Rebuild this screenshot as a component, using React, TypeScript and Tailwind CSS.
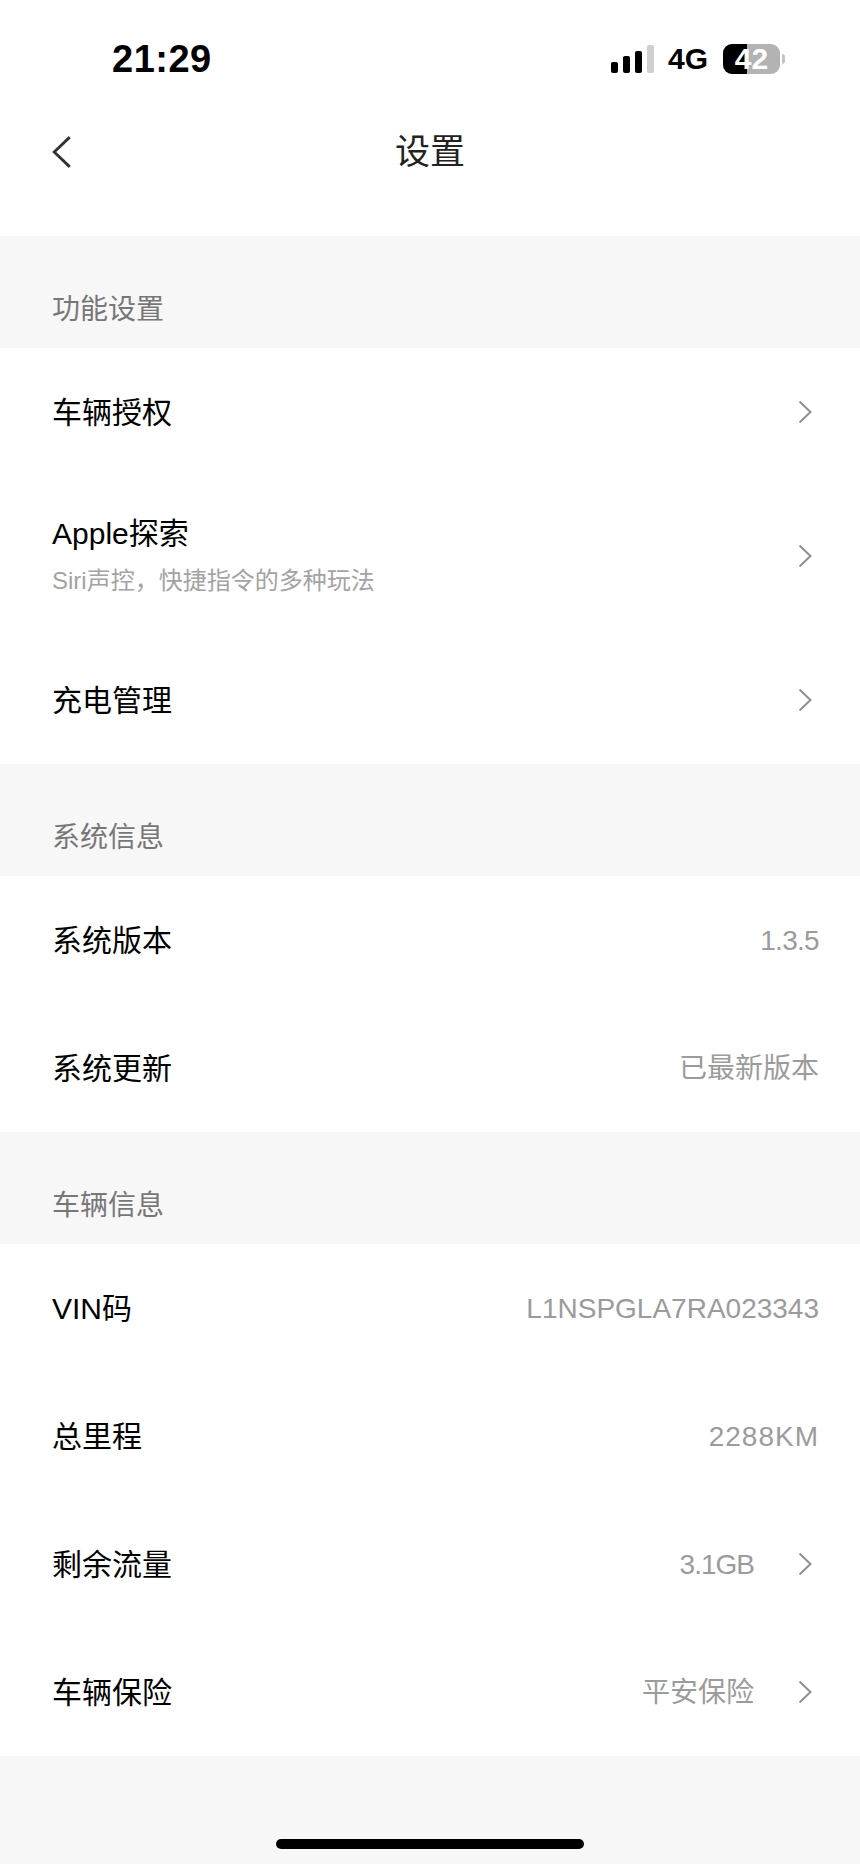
const CJK = "font-['Liberation_Sans','Noto_Sans_CJK_SC',sans-serif]";

function Chevron({ className, right = true }: { className: string; right?: boolean }) {
  return (
    <svg viewBox="0 0 14 24" fill="none" className={className}>
      <path d={right ? "M1.5 1.5 12.5 12 1.5 22.5" : "M12.5 1.5 1.5 12 12.5 22.5"} stroke="currentColor" strokeWidth="2" />
    </svg>
  );
}

function StatusBar() {
  return (
    <div className="h-[96px] flex items-center justify-between pl-[112px] pr-[75px] pt-[21px]">
      <span className="font-['Liberation_Sans',sans-serif] font-bold text-[38px] leading-[38px] tracking-[0.5px] text-black">21:29</span>
      <div className="flex items-center">
        <div className="flex items-end gap-[5px] h-[28px] mr-[14px]">
          <div className="w-[7px] h-[11px] rounded-[2px] bg-black" />
          <div className="w-[7px] h-[17px] rounded-[2px] bg-black" />
          <div className="w-[7px] h-[22px] rounded-[2px] bg-black" />
          <div className="w-[7px] h-[28px] rounded-[2px] bg-[#cfcfcf]" />
        </div>
        <span className="font-['Liberation_Sans',sans-serif] font-bold text-[30px] leading-[28px] text-black mr-[15px]">4G</span>
        <div className="flex items-center gap-[2px]">
          <div className="relative w-[57px] h-[30px] rounded-[9px] bg-[#b3b3b3] flex items-center justify-center">
            <div className="absolute left-0 top-0 bottom-0 w-[24px] rounded-l-[9px] bg-black" />
            <span className="relative font-['Liberation_Sans',sans-serif] font-bold text-[30px] leading-[30px] text-white">42</span>
          </div>
          <div className="w-[3px] h-[10px] rounded-r-[3px] bg-[#c4c4c4]" />
        </div>
      </div>
    </div>
  );
}

function SectionLabel({ text }: { text: string }) {
  return (
    <div className="h-[112px] bg-[#f7f7f7] flex items-end pl-[52px] pb-[20px]">
      <span className="text-[28px] leading-[36px] text-[#777777]">{text}</span>
    </div>
  );
}

function Row({ title, sub, value, valueClass = "", arrow }: { title: string; sub?: string; value?: string; valueClass?: string; arrow?: boolean }) {
  return (
    <div className={`flex items-center justify-between pl-[52px] ${arrow ? "pr-[48px]" : "pr-[41px]"} ${sub ? "h-[160px]" : "h-[128px]"}`}>
      <div className={`flex flex-col ${sub ? "" : "pt-[2px]"}`}>
        <span className="text-[30px] leading-[38px] text-black">{title}</span>
        {sub && <span className="text-[24px] leading-[32px] mt-[12px] text-[#a3a3a3]">{sub}</span>}
      </div>
      <div className="flex items-center gap-[44px]">
        {value && <span className={`pt-[2px] text-[28px] leading-[36px] text-[#9b9b9b] ${valueClass}`}>{value}</span>}
        {arrow && <Chevron className="w-[14px] h-[24px] text-[#8f8f8f]" />}
      </div>
    </div>
  );
}

export default function App() {
  return (
    <div className={`w-[860px] h-[1864px] bg-[#f7f7f7] flex flex-col overflow-hidden ${CJK}`}>
      <div className="bg-white h-[236px]">
        <StatusBar />
        <div className="h-[112px] flex items-center pl-[52px] relative">
          <Chevron right={false} className="w-[20px] h-[34px] text-[#333333]" />
          {/* title stays centered on the page, not between the back arrow and the edge */}
          <span className="absolute left-0 right-0 top-[33px] text-center text-[35px] leading-[46px] text-[#222222]">设置</span>
        </div>
      </div>

      <SectionLabel text="功能设置" />
      <div className="bg-white">
        <Row title="车辆授权" arrow />
        <Row title="Apple探索" sub="Siri声控，快捷指令的多种玩法" arrow />
        <Row title="充电管理" arrow />
      </div>

      <SectionLabel text="系统信息" />
      <div className="bg-white">
        <Row title="系统版本" value="1.3.5" valueClass="tracking-[-0.7px]" />
        <Row title="系统更新" value="已最新版本" />
      </div>

      <SectionLabel text="车辆信息" />
      <div className="bg-white">
        <Row title="VIN码" value="L1NSPGLA7RA023343" />
        <Row title="总里程" value="2288KM" valueClass="tracking-[1px]" />
        <Row title="剩余流量" value="3.1GB" valueClass="tracking-[-1px]" arrow />
        <Row title="车辆保险" value="平安保险" arrow />
      </div>

      <div className="flex-1 flex justify-center">
        <div className="w-[308px] h-[10px] mt-[83px] rounded-full bg-black" />
      </div>
    </div>
  );
}
